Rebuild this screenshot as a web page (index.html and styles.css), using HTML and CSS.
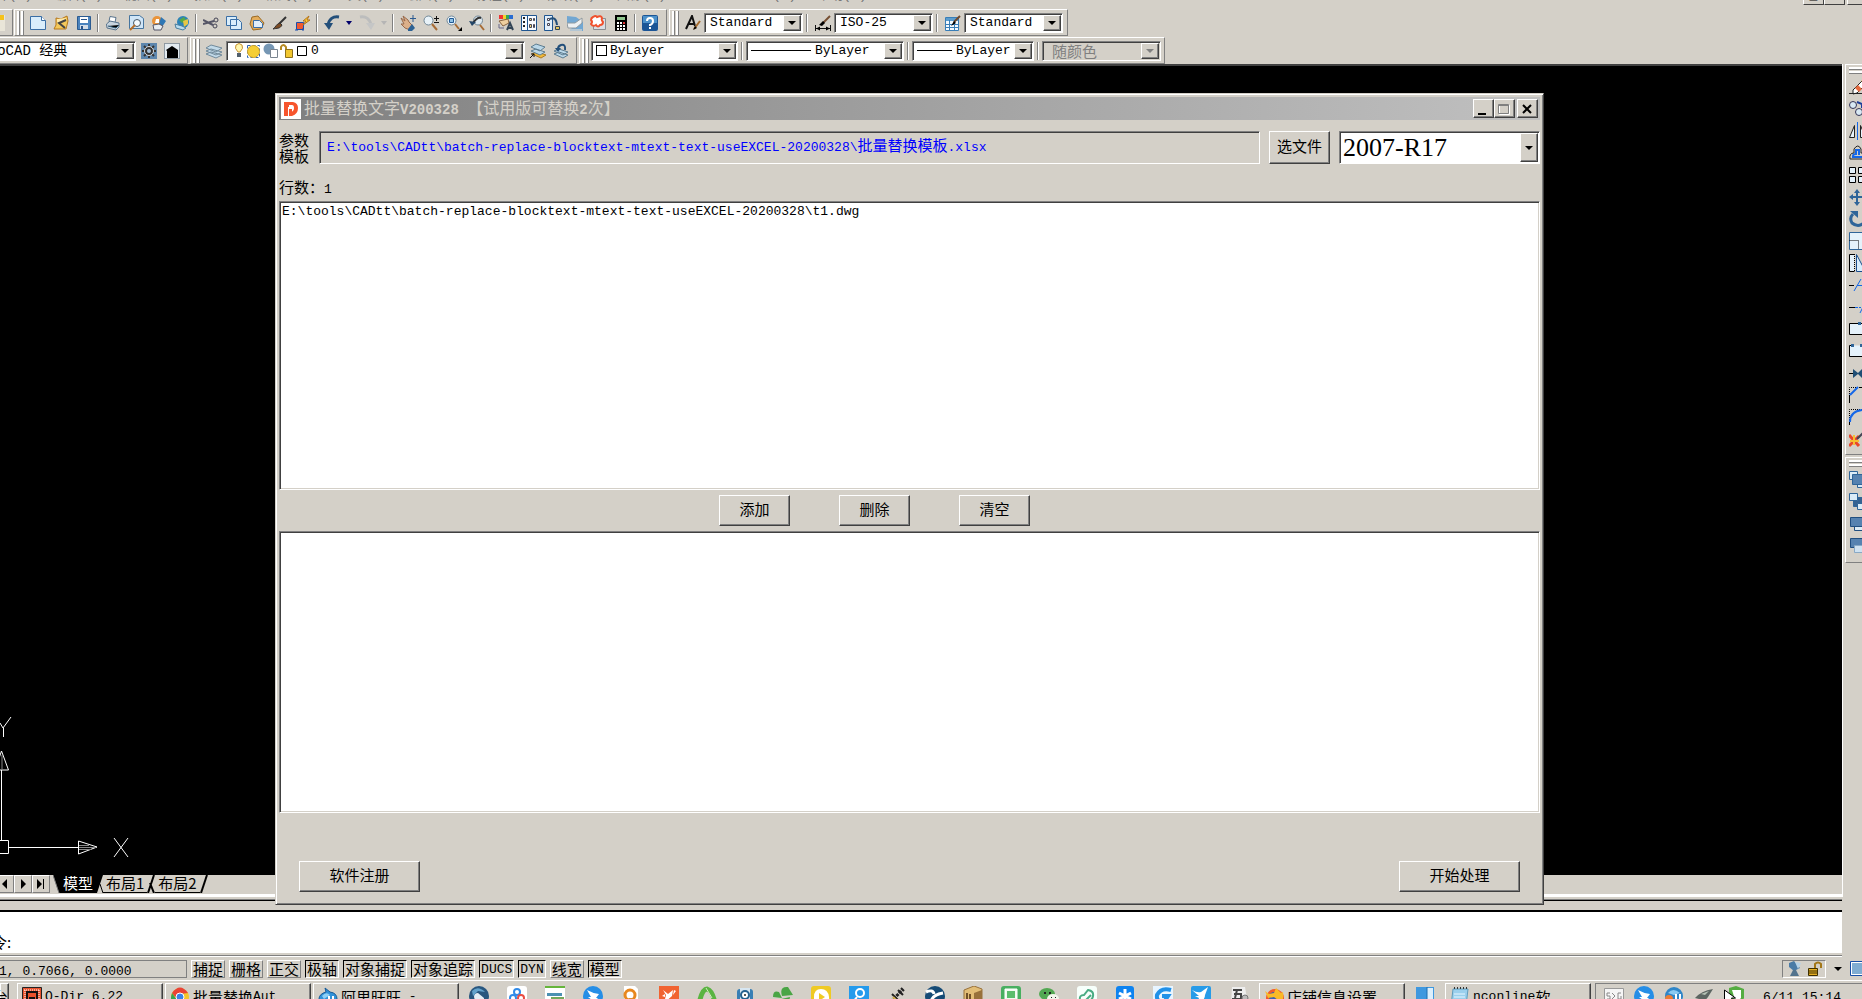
FILE: index.html
```html
<!DOCTYPE html>
<html lang="zh-CN">
<head>
  <meta charset="UTF-8">
  <meta name="viewport" content="width=device-width, initial-scale=1.0">
  <title>批量替换文字V200328</title>
  <link rel="stylesheet" href="styles.css">
</head>
<body>
  <nav class="menubar">
    <span class="first">文件(F)</span><span>编辑(E)</span><span>视图(V)</span><span>插入(I)</span><span>格式(O)</span><span>工具(T)</span><span>绘图(D)</span><span>标注(N)</span><span>修改(M)</span><span>图像(W)</span><span>Batch Plot (E)</span><span>帮助(H)</span>
    <div class="app-controls"><button aria-label="最小化">_</button><button aria-label="还原">▬</button><button aria-label="关闭"></button></div>
  </nav>

  <div class="dock">
    <div class="dock-row">
      <div class="bar bar-cut">
        <svg width="5" height="16" viewBox="0 0 5 16"><path fill="#e9e5d8" d="M0 0h5v16H0z"/><path fill="#f5c21b" d="M0 0h4v5H0z"/></svg>
      </div>
      <div class="bar bar-standard">
        <i class="grip"></i>
        <button class="tool" aria-label="新建"><svg viewBox="0 0 16 16"><path fill="#d9edfb" stroke="#3a6ea5" d="M.5 1.500h11l4 4v9H.5z"/><path fill="#fff" stroke="#3a6ea5" d="M11.500 1.500v4h4"/></svg></button>
        <button class="tool" aria-label="打开"><svg viewBox="0 0 16 16"><path fill="#f4c95b" stroke="#b5771d" d="M3 3l5 1 6-3 1 5-2 8H1l2-4z"/><path fill="#ffe9a8" d="M4 4l9-1-1 2-8 3z"/><path fill="none" stroke="#444" stroke-width="2" d="M13 5L6 8l6 5"/></svg></button>
        <button class="tool" aria-label="保存"><svg viewBox="0 0 16 16"><path fill="#4b83bd" stroke="#2b5b91" d="M1.500 1.500h13v13h-13z"/><path fill="#fff" d="M4 2h8v6H4z"/><path fill="#d4dce6" d="M4 10h8v4H4z"/><path fill="#29548a" d="M5 4h6v1H5zM5 11h2v3H5z"/></svg></button>
        <i class="sep"></i>
        <button class="tool" aria-label="打印"><svg viewBox="0 0 16 16"><path fill="#fff" stroke="#58738c" d="M5 1.500l6 1-1 5-6-1z"/><path fill="#c8d5df" stroke="#58738c" d="M1.500 9L5 6l9 2v4l-3 3-9-2z"/><path stroke="#2e5b78" d="M3 11l8 2 3-3"/></svg></button>
        <button class="tool" aria-label="打印预览"><svg viewBox="0 0 16 16"><path fill="#cfe5f7" stroke="#46759f" d="M1.500.5h10l4 3v10h-14z"/><circle cx="9" cy="8" r="3.500" fill="#f4faff" stroke="#456"/><path stroke="#b56d29" stroke-width="2" d="M7 10l-5 5"/></svg></button>
        <button class="tool" aria-label="发布"><svg viewBox="0 0 16 16"><circle cx="6" cy="6" r="5" fill="#e9943a"/><path fill="#2e77b5" d="M10 2l5 4-4 6-3-3z"/><path fill="#e8edf1" stroke="#556" d="M2 10l6-1 4 2-2 4H3z"/><path fill="#fff" d="M5 4h3v4H4z"/></svg></button>
        <button class="tool" aria-label="三维 DWF"><svg viewBox="0 0 16 16"><circle cx="9" cy="7" r="6" fill="#2c83b8"/><path fill="#57a746" d="M5 5l5-3 2 3-4 3z"/><path fill="#e7c745" d="M9 6l5-2v5l-4 3z"/><path fill="#b9dcef" stroke="#4a7d9d" d="M1 9l7 2 4 2-3 2-7-2z"/></svg></button>
        <i class="sep"></i>
        <button class="tool" aria-label="剪切"><svg viewBox="0 0 16 16"><path stroke="#556" stroke-width="2" d="M0 5l10 5M0 9l11-3"/><circle cx="13" cy="5" r="2" fill="none" stroke="#445"/><circle cx="12" cy="11" r="2" fill="none" stroke="#445"/></svg></button>
        <button class="tool" aria-label="复制"><svg viewBox="0 0 16 16"><path fill="#d9edfb" stroke="#3a6ea5" d="M.5 1.500h10v9H.5zM4.500 4.500h8l3 3v7h-11z"/></svg></button>
        <button class="tool" aria-label="粘贴"><svg viewBox="0 0 16 16"><path fill="#e4ad5c" stroke="#9a6a24" d="M3 2l6-1 6 7-3 6-8 1-3-6z"/><path fill="#e2effa" stroke="#3a6ea5" d="M4.500 5.500h6l3 3v4h-9z"/></svg></button>
        <button class="tool" aria-label="特性匹配"><svg viewBox="0 0 16 16"><path stroke="#333" stroke-width="2" d="M14 2L7 9"/><path fill="#7d4c24" stroke="#333" d="M8 8l2 2c-2 4-5 3-9 4 3-2 3-5 7-6z"/></svg></button>
        <button class="tool" aria-label="块编辑器"><svg viewBox="0 0 16 16"><path fill="#f05a30" stroke="#1b4dac" d="M1.500 7.500h7v7h-7z"/><path fill="#fcd135" stroke="#b5731b" d="M14 1L8 6h3l-3 4 7-5h-3z"/><path stroke="#1b4dac" d="M0 15h3M8 13v3"/></svg></button>
        <i class="sep"></i>
        <button class="tool" aria-label="放弃"><svg viewBox="0 0 16 16"><path fill="none" stroke="#234f7a" stroke-width="3" d="M15 2C9 1 5 4 4 10"/><path fill="#234f7a" d="M0 8h9l-4 7z"/></svg></button>
        <button class="drop" aria-label="放弃列表"></button>
        <button class="tool" aria-label="重做"><svg viewBox="0 0 16 16"><path fill="none" stroke="#bcbdbd" stroke-width="3" d="M1 2c6-1 10 2 11 8"/><path fill="#c5c6c6" d="M7 8h9l-4 7z"/></svg></button>
        <button class="drop off" aria-label="重做列表"></button>
        <i class="sep"></i>
        <button class="tool" aria-label="平移"><svg viewBox="0 0 16 16"><path fill="#dcb08a" stroke="#98694b" d="M1 3l4 3-2-5 5 4 1 2 4 4-3 4-5-2-4-4 3 0z"/><path fill="#2d6294" d="M8 14l4-5 3 4-3 3H8z"/><path stroke="#2b5a91" d="M13 0v7M10 3.500h6"/></svg></button>
        <button class="tool" aria-label="实时缩放"><svg viewBox="0 0 16 16"><circle cx="5.500" cy="5.500" r="4.500" fill="#e8f2f8" stroke="#718797"/><path stroke="#a76c36" stroke-width="2" d="M9 9l5 6"/><path stroke="#111" d="M13.500 1v5M11 3.500h5M11 7.500h5"/></svg></button>
        <button class="tool" aria-label="窗口缩放"><svg viewBox="0 0 16 16"><circle cx="5.500" cy="5.500" r="4.500" fill="#e8f2f8" stroke="#718797"/><path fill="#8dc0e5" stroke="#205894" d="M3.500 3.500h4v4h-4z"/><path stroke="#a76c36" stroke-width="2" d="M9 9l4 5"/><path d="M16 12v4h-4z"/></svg></button>
        <button class="tool" aria-label="缩放上一个"><svg viewBox="0 0 16 16"><circle cx="9" cy="5.500" r="4.500" fill="#dfe9ef" stroke="#718797"/><path fill="none" stroke="#333" stroke-width="2" d="M12 3Q8 2 4 8"/><path fill="#234567" d="M0 6l7 1-4 4z"/><path stroke="#a76c36" stroke-width="2" d="M11 10l4 5"/></svg></button>
        <i class="sep"></i>
        <button class="tool" aria-label="特性"><svg viewBox="0 0 16 16"><path fill="#e33" d="M1 0h4v4H1z"/><path fill="#f3d12c" d="M5 0h3v4H5z"/><path fill="#33a853" d="M8 0h3v4H8z"/><path fill="#286cd2" d="M11 0h4v4h-4z"/><path fill="#efcf9f" stroke="#886340" d="M1 6l9-2 1 4-6 3z"/><path fill="none" stroke="#345" stroke-width="2" d="M9 15l3-7 3 7M10 13h4"/><path fill="none" stroke="#668" d="M1 9v4h5"/></svg></button>
        <button class="tool" aria-label="设计中心"><svg viewBox="0 0 16 16"><path fill="#f8fbff" stroke="#1f5590" d="M.5.5h15v15H.5z"/><path stroke="#1f5590" d="M6.500 0v16"/><path stroke="#222" stroke-width="2" stroke-dasharray="2 2" d="M3 2v12"/><path fill="#f2dc77" stroke="#445" d="M8.500 3.500h2v2h-2zM12.500 3.500h1v2h-1zM8.500 9.500h2v3h-2zM12.500 9.500h1v3h-1z"/></svg></button>
        <button class="tool" aria-label="工具选项板"><svg viewBox="0 0 16 16"><path fill="#e1eefa" stroke="#1f5590" d="M.5.5h8v15h-8z"/><path fill="#fff" stroke="#445" d="M3.500 3.500h2v2h-2zM3.500 8.500h2v2h-2z"/><path fill="none" stroke="#234f7a" stroke-width="2" d="M6 4q6-3 7 6"/><path fill="#e3c55b" stroke="#345" d="M11.500 11.500h4v3h-4z"/></svg></button>
        <button class="tool" aria-label="图纸集"><svg viewBox="0 0 16 16"><path fill="#72a7d2" d="M0 1l9 1 7 5v9H9L0 11z"/><path fill="#edf0f2" stroke="#919a9f" d="M0 8h8l7-5v5l-6 5H1z"/><path fill="#b4c6d3" d="M3 14h12v2H3z"/></svg></button>
        <button class="tool" aria-label="标记集"><svg viewBox="0 0 16 16"><path fill="#d9dee4" stroke="#8a8d91" d="M3.500 3.500h12v11h-12z"/><path fill="#fff" stroke="#f0512d" stroke-width="2" d="M3 2q3-2 4 0 4-2 5 1-1 2 1 4 0 3-3 3-2 3-4 0-3 2-5-1 2-2 0-4 0-2 2-3z"/></svg></button>
        <button class="tool" aria-label="计算器"><svg viewBox="0 0 16 16"><path d="M2 0h12v16H2z"/><path fill="#8fc68e" d="M4 2h8v3H4z"/><path stroke="#fff" stroke-width="2" stroke-dasharray="2 1" d="M4 8h8M4 11h8M4 14h8"/><path fill="#d33" d="M10 7h2v2h-2z"/></svg></button>
        <i class="sep"></i>
        <button class="tool" aria-label="帮助"><svg viewBox="0 0 16 16"><rect width="16" height="16" rx="2" fill="#1b5596"/><path fill="#4c91ca" d="M1 1h14v7H1z"/><path fill="none" stroke="#fff" stroke-width="2" d="M5 6q0-3 3-3t3 3-3 4v1M8 12v2"/></svg></button>
      </div>
      <div class="bar">
        <i class="grip"></i>
        <button class="tool" aria-label="文字样式"><svg viewBox="0 0 16 16"><path fill="none" stroke="#111" stroke-width="2" d="M1 14L7 1l3 10M3 9h6"/><path stroke="#a56b2d" stroke-width="2" d="M15 6l-6 8"/><path d="M10 11l2 2-4 2z"/></svg></button>
        <span class="combo combo-style"><select aria-label="文字样式"><option>Standard</option></select><i></i></span>
        <i class="sep thick"></i>
        <button class="tool" aria-label="标注样式"><svg viewBox="0 0 16 16"><path stroke="#111" d="M.5 10v6M15.500 10v6M0 13.500h16"/><path d="M1 13.500l4-2v4zM15 13.500l-4-2v4z"/><path stroke="#765033" stroke-width="2" d="M15 1L8 8"/><path d="M4 10l4-4 2 2-3 3z"/></svg></button>
        <span class="combo combo-style"><select aria-label="标注样式"><option>ISO-25</option></select><i></i></span>
        <i class="sep thick"></i>
        <button class="tool" aria-label="表格样式"><svg viewBox="0 0 16 16"><path fill="#f4faff" stroke="#397eb7" d="M.5 2.500h13v13H.5z"/><path fill="#5b9dce" d="M1 3h12v3H1z"/><path stroke="#397eb7" d="M0 9.500h14M0 12.500h14M4.500 5v10M9.500 5v10"/><path stroke="#704a2d" stroke-width="2" d="M15 1L9 7"/><path d="M9 6l2 2-5 3z"/></svg></button>
        <span class="combo combo-style"><select aria-label="表格样式"><option>Standard</option></select><i></i></span>
      </div>
    </div>

    <div class="dock-row">
      <div class="bar bar-workspace">
        <span class="combo combo-workspace"><select aria-label="工作空间"><option>AutoCAD 经典</option></select><i></i></span>
        <button class="tool" aria-label="工作空间设置"><svg viewBox="0 0 16 16"><path fill="#5d86ad" d="M0 0h16v16H0z"/><path stroke="#333" stroke-width="2" d="M8 1v14M1 8h14M3 3l10 10M13 3L3 13"/><circle cx="8" cy="8" r="4.500" fill="#333" stroke="#ddd"/><circle cx="8" cy="8" r="2" fill="#a9c2da"/></svg></button>
        <button class="tool" aria-label="我的工作空间"><svg viewBox="0 0 16 16"><path fill="#e3ebf1" stroke="#42566b" stroke-dasharray="1 1" d="M.5.5h15v15H.5z"/><path d="M2 7l6-4 6 4v8H3V8z"/></svg></button>
      </div>
      <div class="bar">
        <i class="grip"></i>
        <button class="tool" aria-label="图层特性"><svg viewBox="0 0 16 16"><g fill="#c1d9e8" stroke="#70899a"><path d="M0 11l5-2 11 3-6 3zM0 8l5-2 11 3-6 3zM0 5l5-3 11 3-6 4z"/></g></svg></button>
        <span class="combo combo-layer">
          <svg class="layer-state" width="75" height="16" viewBox="0 0 75 16"><path fill="#fff6ad" stroke="#c69233" d="M6 9Q2 5 4 2q3-3 6 0 2 3-2 7z"/><path fill="#52606d" d="M5 10h4v4H5z"/><path fill="none" stroke="#2d64b3" stroke-dasharray="3 2" d="M15.500 2.500h12v12h-12z"/><circle cx="21.500" cy="8.500" r="6" fill="#f5ce36" stroke="#cfa32a"/><circle cx="37" cy="6" r="5.500" fill="#7697b4"/><path fill="#fff" stroke="#7a8590" d="M38.500 6.500h7v8h-7z"/><path fill="none" stroke="#b68a23" stroke-width="2" d="M49 7V4q2-4 5 0v3"/><path fill="#f2c72f" stroke="#8e701d" d="M53.500 6.500h7v8h-7z"/><path fill="#fff" stroke="#000" d="M65.500 3.500h9v9h-9z"/></svg>
          <select aria-label="图层"><option>0</option></select><i></i></span>
        <button class="tool" aria-label="置为当前图层"><svg viewBox="0 0 16 16"><path fill="#efb93c" stroke="#ad7c22" d="M2 11l5-2 9 3-5 3z"/><g fill="#bad7e8" stroke="#5e7d90"><path d="M1 8l5-2 9 3-5 3zM1 4l5-3 9 3-5 4z"/></g><path fill="none" stroke="#111" d="M0 15l4-4M1 11h3v3"/></svg></button>
        <button class="tool" aria-label="上一个图层"><svg viewBox="0 0 16 16"><g fill="#bad7e8" stroke="#5e7d90"><path d="M1 11l5-2 9 3-5 3zM1 8l5-2 9 3-5 3z"/></g><path fill="none" stroke="#234f7a" stroke-width="2" d="M12 7q1-6-4-5-3 1-3 4"/><path fill="#234f7a" d="M2 5h6l-3 4z"/></svg></button>
      </div>
      <div class="bar bar-props">
        <i class="grip"></i>
        <span class="combo combo-color"><b class="swatch"></b><select aria-label="颜色"><option>ByLayer</option></select><i></i></span>
        <i class="sep thick"></i>
        <span class="combo combo-line"><b class="line line-long"></b><select aria-label="线型"><option>ByLayer</option></select><i></i></span>
        <i class="sep thick"></i>
        <span class="combo combo-weight"><b class="line"></b><select aria-label="线宽"><option>ByLayer</option></select><i></i></span>
        <i class="sep thick"></i>
        <span class="combo combo-plot off"><select aria-label="打印样式" disabled><option>随颜色</option></select><i></i></span>
      </div>
    </div>
  </div>

  <div class="workspace">
    <div class="drawing">
      <div class="canvas">
        <svg width="135" height="160" viewBox="0 0 135 160" fill="none" stroke="#fff"><path d="M0 8l3 5 8-11M3.500 13v9M1.500 55v70M-5 125.500H8.500v13H-5M9 132.500h69M1.500 36l7 19H-5zM78.500 126v13L97 132zM114 123l14 19M128 123l-14 19"/><path stroke="#888" d="M2 40v14M79 130.500h10M79 134.500h12M79 132.500h17"/></svg>
      </div>
      <div class="tabs">
        <button class="tab-nav" aria-label="上一个"><svg width="8" height="10" viewBox="0 0 8 10"><path d="M6 0v10L1 5z"/></svg></button>
        <button class="tab-nav" aria-label="下一个"><svg width="8" height="10" viewBox="0 0 8 10"><path d="M2 0v10l5-5z"/></svg></button>
        <button class="tab-nav" aria-label="最后"><svg width="8" height="10" viewBox="0 0 8 10"><path d="M0 0v10l5-5zM6 0h1v10H6z"/></svg></button>
        <svg class="edge edge-first" viewBox="0 0 8 18"><path d="M0 0h8v18H6z"/><path stroke="#777" d="M0 0l6 18"/></svg>
        <button class="tab active">模型</button>
        <svg class="edge" viewBox="0 0 8 18"><path d="M0 0h8L2 18H0z"/><path stroke="#000" fill="none" d="M5 9l3 9"/></svg>
        <button class="tab">布局1</button>
        <svg class="edge" viewBox="0 0 8 18"><path stroke="#000" stroke-width="2" fill="none" d="M7 0L1 18M3 8l4 10"/></svg>
        <button class="tab">布局2</button>
        <svg class="edge" viewBox="0 0 8 18"><path stroke="#000" stroke-width="2" d="M7 0L1 18"/></svg>
      </div>
    </div>

    <aside class="modify">
      <div class="vbar">
        <i class="vgrip"></i>
        <svg viewBox="0 0 18 18"><path fill="#fff" stroke="#222" d="M4 12l9-9 4 3-9 9-4 1z"/><path fill="#e56a3f" d="M6 10l3-3 4 4-3 3z"/><path fill="#f7b52d" d="M12 3l5-3v6z"/><path stroke="#222" d="M0 15.500h16"/></svg>
        <svg viewBox="0 0 18 18" fill="#d8e9f4" stroke="#335"><circle cx="4" cy="5" r="3.500"/><circle cx="10" cy="12" r="3.500"/><path fill="none" stroke="#1c3d9a" stroke-width="2" d="M8 2l5 2v4"/></svg>
        <svg viewBox="0 0 18 18"><path fill="#e8f4fd" stroke="#222" d="M.5 15.500l5-12v12zM16.500 15.500l-5-12v12z"/><path stroke="#1467e8" d="M8.500 0v18"/></svg>
        <svg viewBox="0 0 18 18" fill="none"><path stroke="#222" d="M1 15h15V9h-4V5q-3-6-7 0v4Q0 9 1 15z"/><path stroke="#1467e8" stroke-width="2" d="M3 13h11M4 12q0-2 3-2V6h3v5"/></svg>
        <svg viewBox="0 0 18 18" fill="#e5f2fb" stroke="#000"><path d="M.5 1.500h6v6h-6zM9.500 1.500h6v6h-6zM.5 10.500h6v6h-6zM9.500 10.500h6v6h-6z"/></svg>
        <svg viewBox="0 0 18 18" fill="#2f6599"><path d="M8 1l3 4H9v3h4V6l4 3-4 3v-2H9v4h2l-3 4-3-4h2v-4H4v2L0 9l4-3v2h3V5H5z"/></svg>
        <svg viewBox="0 0 18 18"><path fill="none" stroke="#2f6599" stroke-width="3" d="M4 4q-4 4-1 9 6 5 12 0"/><path fill="#2f6599" d="M1 1h8v7z"/></svg>
        <svg viewBox="0 0 18 18"><path fill="#e5f2fb" stroke="#2f6599" d="M.5.5h17v17H.5z"/><path fill="none" stroke="#000" stroke-dasharray="1 1" d="M.5 8.500h9v9"/></svg>
        <svg viewBox="0 0 18 18"><path fill="#e5f2fb" stroke="#000" d="M5.500.5h-5v17h5"/><path stroke="#000" stroke-dasharray="1 1" d="M5.500 0v18"/><path fill="#d9edfb" stroke="#1b4e8d" d="M7.500.5v17h9z"/></svg>
        <svg viewBox="0 0 18 18"><path stroke="#000" d="M0 9.500h5M13 9.500h5"/><path stroke="#1467e8" d="M5 15l7-12M8 9.500h5"/></svg>
        <svg viewBox="0 0 18 18"><path stroke="#000" d="M0 9.500h6"/><path stroke="#1467e8" stroke-dasharray="3 1" d="M6 9.500h6"/><path stroke="#1467e8" d="M11 15l6-12"/></svg>
        <svg viewBox="0 0 18 18"><path fill="#e5f2fb" stroke="#000" d="M.5 3.500h17v11H.5z"/><path fill="#2f6599" d="M9 2h3v3H9z"/></svg>
        <svg viewBox="0 0 18 18"><path fill="#e5f2fb" stroke="#000" d="M3 3.500H.5v11h17v-11H13"/><path fill="#2f6599" d="M2 2h3v3H2zM11 2h3v3h-3z"/></svg>
        <svg viewBox="0 0 18 18"><path stroke="#000" d="M0 9.500h18"/><path fill="#1f4e75" d="M4 5l5 4 4-4v9L9 10l-5 4z"/></svg>
        <svg viewBox="0 0 18 18"><path fill="none" stroke="#000" stroke-dasharray="1 1" d="M.5 8V1.500h9"/><path stroke="#000" d="M.5 9v8M10 1.500h7"/><path stroke="#1467e8" stroke-width="2" d="M1 9l8-8"/></svg>
        <svg viewBox="0 0 18 18"><path fill="none" stroke="#000" stroke-dasharray="1 1" d="M.5 12V1.500h14"/><path stroke="#000" d="M.5 12v5"/><path fill="none" stroke="#1467e8" stroke-width="2" d="M1 14Q1 3 14 2"/></svg>
        <svg viewBox="0 0 18 18"><path stroke="#e9472a" stroke-width="3" d="M0 5l10 11M10 6L0 16"/><path stroke="#f6bf31" stroke-width="2" d="M5 5v10M1 11h9"/><path stroke="#445" stroke-width="2" d="M8 9l9-9"/></svg>
      </div>
      <div class="vbar order">
        <i class="vgrip"></i>
        <svg viewBox="0 0 18 18" stroke="#2f6599"><path fill="#dcecf7" d="M.5.5h8v8h-8zM8.500 9.500h8v7h-8z"/><path fill="#5682b0" d="M3.500 3.500h11v10h-11z"/></svg>
        <svg viewBox="0 0 18 18" stroke="#2f6599"><path fill="#356291" d="M4.500 4.500h10v9h-10z"/><path fill="#dcecf7" d="M.5.500h8v7h-8zM8.500 10.500h8v6h-8z"/></svg>
        <svg viewBox="0 0 18 18" stroke="#214f80"><path fill="#dcecf7" d="M5.500 8.500h12v7h-12z"/><path fill="#5682b0" d="M1.500 2.500h14v9h-14z"/></svg>
        <svg viewBox="0 0 18 18" stroke="#214f80"><path fill="#5682b0" d="M1.500 1.500h14v9h-14z"/><path fill="#cfe2f1" stroke="#89a9c5" d="M5.500 8.500h12v7h-12z"/></svg>
      </div>
    </aside>
  </div>

  <div class="command"><label for="cmd">命令:</label><input id="cmd" type="text"></div>

  <div class="status">
    <div class="coords">1, 0.7066, 0.0000</div>
    <button>捕捉</button><button>栅格</button><button>正交</button><button class="on">极轴</button><button class="on">对象捕捉</button><button class="on">对象追踪</button><button class="on latin">DUCS</button><button class="on latin">DYN</button><button>线宽</button><button class="on">模型</button>
    <div class="status-tray">
      <svg width="16" height="16" viewBox="0 0 16 16"><path fill="#4a7ba6" d="M2 2l5-2 6 7-6 3-5-4z"/><path fill="#b7d2e6" d="M8 1l6 1-3 6z"/><path fill="#54748d" d="M6 9h3l3 6H3z"/></svg>
      <svg width="16" height="16" viewBox="0 0 16 16"><path fill="none" stroke="#a37717" stroke-width="2" d="M8 7V3q3-3 6 0v4"/><path fill="#e7af22" stroke="#403000" d="M1.500 7.500h9v7h-9z"/><path stroke="#403000" d="M2 10h8M2 12h8"/></svg>
    </div>
    <button class="drop black" aria-label="状态栏菜单"></button>
    <svg class="clean" width="12" height="16" viewBox="0 0 12 16"><path fill="#fff" stroke="#174ea6" d="M.5.500h15v14H.5z"/><path fill="#80add2" d="M2 2h10v11H2z"/></svg>
  </div>

  <footer class="taskbar">
    <button class="task task-cut">台</button>
    <button class="task"><svg viewBox="0 0 20 20"><path fill="#e7522d" stroke="#222" d="M.5.500h19v19H.5z"/><path fill="none" stroke="#fff" stroke-dasharray="1 1" d="M2 3h16M2 17h16M3 3v14M17 3v14"/><path fill="#e7522d" stroke="#111" stroke-width="2" d="M5 5h10v10h-3v-4H8v4H5z"/></svg>Q-Dir 6.22</button>
    <button class="task"><svg viewBox="0 0 20 20"><circle cx="10" cy="10" r="9" fill="#f5c52c"/><path fill="#e94335" d="M2 6q8-11 16 0l-8 1-3 5z"/><path fill="#34a553" d="M2 6l5 7 3 6Q-2 18 2 6z"/><circle cx="10" cy="10" r="4" fill="#3c82e8" stroke="#fff"/></svg><span class="zh">批量替换</span>Aut</button>
    <button class="task"><svg viewBox="0 0 20 20"><path fill="#3191d8" stroke="#165a97" d="M7 1l5 4q7 1 7 7-1 7-9 7-9 0-9-7 0-5 7-7z"/><path fill="#8ed0f6" d="M4 9q4-5 8-1l-6 4z"/><path stroke="#fff" stroke-width="2" d="M11 9v4M15 9v4"/></svg><span class="zh">阿里旺旺</span> -</button>
    <div class="quick">
      <svg viewBox="0 0 20 20"><circle cx="10" cy="10" r="10" fill="#29577f"/><path fill="#e4eef5" d="M5 11q0-4 4-4l6 5v6H7z"/><path fill="#64a3cc" d="M3 5q6-6 13 1l-7-1-5 5z"/></svg>
      <svg viewBox="0 0 20 20"><rect width="20" height="20" rx="3" fill="#fff"/><g fill="none" stroke-width="2"><circle cx="10" cy="6" r="3" stroke="#318be8"/><circle cx="6" cy="12" r="3" stroke="#318be8"/><circle cx="14" cy="12" r="3" stroke="#e94c42"/></g></svg>
      <svg viewBox="0 0 20 20"><path fill="#fff" d="M0 0h20v20H0z"/><path fill="#65b53b" d="M0 0h20v2H0z"/><path fill="#4b91b2" d="M2 7h15v3H2z"/><path fill="#75a95a" d="M6 11h13v3H6z"/></svg>
      <svg viewBox="0 0 20 20"><circle cx="10" cy="10" r="10" fill="#268ee6"/><path fill="#fff" d="M4 4q5 3 12 4l-3 4h2l-7 7 1-5-4-3h3z"/></svg>
      <svg viewBox="0 0 20 20"><path fill="#fff" d="M3 0h11l3 3v17H3z"/><circle cx="9" cy="9" r="5" fill="none" stroke="#e8881e" stroke-width="3"/><path fill="#dc8b31" d="M8 12h4v4H8z"/></svg>
      <svg viewBox="0 0 20 20"><path fill="#f16331" d="M0 0h20v20H0z"/><path fill="#fff" d="M4 4l5 4 5-4-1 6-8 7 2-8zM3 10l3-2v3zM15 4l2 1-3 4z"/></svg>
      <svg viewBox="0 0 20 20"><path fill="none" stroke="#5ab442" stroke-width="5" d="M2 18Q5 3 10 3q6 2 8 15"/><path stroke="#d3ebbf" d="M9 2l6 10"/></svg>
      <svg viewBox="0 0 20 20"><rect x="2" y="3" width="16" height="15" rx="3" fill="#387fb5"/><path fill="#d7e6f1" d="M5 2h10v13H5z"/><circle cx="10" cy="9" r="4" fill="#fff" stroke="#26618f" stroke-width="2"/><circle cx="10" cy="9" r="1" fill="#222"/></svg>
      <svg viewBox="0 0 20 20"><g fill="#4aa545"><path d="M9 10Q6 0 15 1l5 8zM0 11Q0 4 6 6l3 6zM4 14l13-3q-1 8-8 7z"/></g></svg>
      <svg viewBox="0 0 20 20"><rect width="20" height="20" rx="3" fill="#efca24"/><path fill="#fff" d="M3 11q0-8 7-8t8 8-8 7H3z"/><path fill="#efca24" d="M8 7l6 4-6 4z"/></svg>
      <svg viewBox="0 0 20 20"><path fill="#249aec" d="M0 0h20v20H0z"/><path fill="#f9d84a" d="M0 15h20v5H0z"/><circle cx="11" cy="7" r="4" fill="none" stroke="#fff" stroke-width="2"/><path stroke="#fff" stroke-width="2" d="M8 11l-4 5"/></svg>
      <svg viewBox="0 0 20 20"><path stroke="#222" stroke-width="3" stroke-dasharray="3 1" d="M4 16L15 4"/><path stroke="#222" stroke-width="2" d="M5 8l6 6M11 4l5 5M14 2l3 3"/><path stroke="#d8b34c" stroke-width="2" d="M6 11l3 3"/></svg>
      <svg viewBox="0 0 20 20"><circle cx="10" cy="10" r="10" fill="#154a75"/><path fill="none" stroke="#fff" stroke-width="3" d="M1 6q7-3 8 2M6 19q-1-10 12-12"/></svg>
      <svg viewBox="0 0 20 20"><path fill="#e2bd76" stroke="#98713b" d="M1 4l10-4 8 3v14l-8 3-10-4z"/><path fill="#98713b" d="M11 7l8-3v13l-8 3z"/><path stroke="#705028" stroke-width="2" d="M4 7v9M7 8v6"/></svg>
      <svg viewBox="0 0 20 20"><rect width="20" height="20" rx="3" fill="#48af60"/><path fill="#f1faf0" stroke="#fff" d="M4 3h12v14H4z"/><path fill="#5bbd6c" d="M6 5h8v7H6z"/></svg>
      <svg viewBox="0 0 20 20"><ellipse cx="8" cy="8" rx="8" ry="6" fill="#52a852"/><ellipse cx="14" cy="13" rx="6" ry="5" fill="#f3f7ed"/><path fill="#222" d="M5 6h2v2H5zM10 6h2v2h-2zM12 11h1v1h-1zM16 11h1v1h-1z"/></svg>
      <svg viewBox="0 0 20 20"><rect width="20" height="20" rx="3" fill="#f7fffb"/><path fill="none" stroke="#49ab83" stroke-width="2" d="M3 14q-1-5 4-5l4-5q6 1 5 6-1 6-7 4l5-5"/></svg>
      <svg viewBox="0 0 20 20"><rect x="1" width="18" height="20" rx="3" fill="#0d83f0"/><path stroke="#fff" stroke-width="3" d="M10 3v14M4 7l12 6M16 7L4 13"/></svg>
      <svg viewBox="0 0 20 20"><path fill="#e8f5ff" d="M0 0h20v20H0z"/><path fill="none" stroke="#2191e8" stroke-width="4" d="M18 4Q8 1 4 9q-1 7 7 7l4-6H9"/></svg>
      <svg viewBox="0 0 20 20"><rect width="20" height="20" rx="2" fill="#279be8"/><path fill="#fff" d="M1 4q5 3 9 2l7-5-3 8q0 6-8 8l2-5-4-2h4z"/></svg>
      <svg viewBox="0 0 20 20"><path fill="#eee" d="M3 1h13l3 18H2z"/><path fill="none" stroke="#444" stroke-width="2" d="M4 4h9M8 4L6 12M5 8h7v5M3 13h12"/><circle cx="16" cy="12" r="3" fill="#bbb" stroke="#777"/></svg>
    </div>
    <button class="task"><svg viewBox="0 0 20 20"><circle cx="11" cy="11" r="9" fill="#f15a2b"/><circle cx="10" cy="10" r="5" fill="#3d61b1"/><path fill="#f9ba27" d="M1 4l4 3 5-1 2-5 5 5 2-1q2 14-10 13l5-5-4-3-6 1z"/></svg><span class="zh">店铺信息设置</span></button>
    <div class="quick single"><svg viewBox="0 0 20 20"><path fill="#3f98df" d="M1 1h18v18H1z"/><path fill="#dceffc" d="M12 2h6v11l-6 3z"/><path stroke="#1d6cac" d="M12 1v18"/></svg></div>
    <button class="task"><svg viewBox="0 0 20 20"><path fill="#9bd0ed" stroke="#5f9cbd" d="M3 2h15l-2 17H1z"/><path stroke="#e8f7ff" d="M4 7h11M4 10h11M4 13h11"/><path stroke="#333" stroke-width="2" stroke-dasharray="1 2" d="M4 1h14"/></svg>nconline<span class="zh">软</span></button>
    <div class="tray">
      <svg viewBox="0 0 20 20"><path fill="#f5f5f5" stroke="#999" d="M.5 2.500h19v16H.5z"/><path fill="none" stroke="#888" d="M6 7H3v3h3v3H3M8 7l3 3-3 3M17 7h-3v6h3v-3"/></svg>
      <svg viewBox="0 0 20 20"><circle cx="10" cy="10" r="10" fill="#268ee6"/><path fill="#fff" d="M4 4q5 3 12 4l-3 4h2l-7 7 1-5-4-3h3z"/></svg>
      <svg viewBox="0 0 20 20"><circle cx="10" cy="10" r="9" fill="#2f86c8"/><path fill="#8acaf1" d="M4 7q5-6 12 0l-6 2z"/><path stroke="#fff" stroke-width="2" d="M12 8v5M16 8v5"/><circle cx="5" cy="13" r="4" fill="#ee7d35"/></svg>
      <svg viewBox="0 0 20 20"><path fill="#5c6662" d="M1 12Q7 5 19 3l-5 8q-5 7-14 7l5-5z"/><path fill="#b5c2b5" d="M7 8l8-3-4 4z"/></svg>
      <svg viewBox="0 0 20 20"><path fill="#55ad42" d="M5 2l7-2 8 3v9q-3 7-8 8-6-2-7-8z"/><path fill="#fff" d="M8 4h9v8l-5 5z"/><path fill="#fff" stroke="#000" d="M.5 4v14l4-4 3 5 3-2-3-5h4z"/></svg>
      <time>6/11 15:14</time>
    </div>
  </footer>

  <section class="dialog" role="dialog" aria-labelledby="dialogTitle">
    <header class="titlebar">
      <svg width="20" height="20" viewBox="0 0 20 20"><path fill="#fff" d="M0 0h20v20H0z"/><path fill="#f7552d" d="M3 3h9q5 1 5 6 0 6-6 8H8v-4h2q3-1 3-4t-2-3H8v2H7v9H3z"/><path fill="#f7552d" d="M8 10h3v3H8z"/></svg>
      <h1 id="dialogTitle"><span class="zh">批量替换文字</span>V200328 <span class="zh">【试用版可替换</span>2<span class="zh">次】</span></h1>
      <div class="controls">
        <button aria-label="最小化"><svg viewBox="0 0 18 16"><path d="M4 12h8v2H4z"/></svg></button>
        <button aria-label="最大化" disabled><svg viewBox="0 0 18 16"><path fill="none" stroke="#fff" d="M4.500 4.500h10v9h-10z"/><path fill="none" stroke="#808080" d="M3.500 3.500h10v9h-10zM3 4.500h10"/></svg></button>
        <button class="close" aria-label="关闭"><svg viewBox="0 0 18 16"><path stroke="#000" stroke-width="2" d="M5 4l8 8M13 4l-8 8"/></svg></button>
      </div>
    </header>

    <div class="params">
      <div class="params-label">参数<br>模板</div>
      <output class="path">E:\tools\CADtt\batch-replace-blocktext-mtext-text-useEXCEL-20200328\<span class="zh">批量替换模板</span>.xlsx</output>
      <button class="btn pick">选文件</button>
      <span class="combo combo-version"><select aria-label="CAD 版本"><option>2007-R17</option></select><i></i></span>
    </div>

    <label class="rows" for="files"><span class="zh">行数：</span>1</label>
    <select id="files" class="files" size="2">
      <option>E:\tools\CADtt\batch-replace-blocktext-mtext-text-useEXCEL-20200328\t1.dwg</option>
    </select>
    <div class="actions">
      <button class="btn">添加</button>
      <button class="btn">删除</button>
      <button class="btn">清空</button>
    </div>
    <textarea class="log" aria-label="处理记录" readonly></textarea>
    <footer class="dialog-foot">
      <button class="btn wide">软件注册</button>
      <button class="btn wide">开始处理</button>
    </footer>
  </section>
</body>
</html>
```

FILE: styles.css
```css
:root {
  --face: #d4d0c8;
  --shadow: #808080;
  --dark: #404040;
  --mono: "Liberation Mono", "Noto Sans CJK SC", monospace;
  --cjk: "Noto Sans CJK SC", sans-serif;
}
* {
  box-sizing: border-box;
}
body {
  margin: 0;
  height: 100vh;
  display: flex;
  flex-direction: column;
  position: relative;
  overflow: hidden;
  background: var(--face);
  color: #000;
  font: 13px/16px var(--mono);
}
button, input, select, textarea {
  margin: 0;
  padding: 0;
  font: inherit;
  color: inherit;
  border: 0;
  border-radius: 0;
  outline: none;
}
button {
  background: var(--face);
}
svg {
  display: block;
  flex: none;
}
.zh {
  font-family: var(--cjk);
  font-size: 15px;
}

/* menu */
.menubar {
  flex: none;
  height: 9px;
  padding-bottom: 5px;
  display: flex;
  align-items: flex-end;
  gap: 21px;
  overflow: hidden;
  color: #777;
  white-space: pre;
}
.menubar .first {
  margin-left: -17px;
}
.app-controls {
  display: flex;
  margin: 0 -6px -1px auto;
}
.app-controls button {
  width: 21px;
  height: 18px;
  color: #000;
  border: 1px solid #fff;
  border-color: #fff var(--dark) var(--dark) #fff;
}
.app-controls button:last-child {
  margin-left: 2px;
}

/* toolbars */
.dock {
  flex: none;
  display: flex;
  flex-direction: column;
  gap: 1px;
}
.dock-row {
  display: flex;
  gap: 2px;
}
.bar {
  height: 27px;
  display: flex;
  align-items: center;
  padding: 0 4px 0 2px;
  border: 1px solid #fff;
  border-color: #fff var(--shadow) var(--shadow) #fff;
}
.bar-cut {
  width: 13px;
  padding: 0;
  border-left: 0;
}
.bar-standard {
  width: 653px;
  margin-left: -1px;
}
.grip {
  flex: none;
  width: 7px;
  height: 24px;
  margin-right: 2px;
  background: linear-gradient(90deg, #fff 2px, var(--shadow) 2px 3px, var(--face) 3px 4px, #fff 4px 6px, var(--shadow) 6px);
}
.sep {
  flex: none;
  width: 2px;
  height: 18px;
  margin: 0 2px;
  background: linear-gradient(90deg, var(--shadow) 1px, #fff 1px);
}
.sep.thick {
  margin: 0 3px;
}
.tool {
  flex: none;
  width: 23px;
  height: 22px;
  display: flex;
  align-items: center;
  justify-content: center;
}
.tool svg {
  width: 16px;
  height: 16px;
}
.drop {
  flex: none;
  width: 12px;
  height: 16px;
  display: flex;
  align-items: center;
  justify-content: center;
}
.drop::before {
  content: "";
  border: solid transparent;
  border-width: 4px 3px 0;
  border-top-color: #00006b;
}
.drop.off::before {
  border-top-color: #b5b5b5;
}
.drop.black::before {
  border-width: 4px 4px 0;
  border-top-color: #000;
}
.combo {
  flex: none;
  height: 20px;
  display: flex;
  align-items: center;
  padding: 1px;
  background: #fff;
  border: 1px solid #fff;
  border-color: var(--shadow) #fff #fff var(--shadow);
  box-shadow: inset 1px 1px var(--dark);
}
.combo select {
  flex: 1;
  min-width: 0;
  height: 16px;
  padding-left: 4px;
  appearance: none;
  background: transparent;
}
.combo > i {
  flex: none;
  align-self: stretch;
  width: 18px;
  display: flex;
  align-items: center;
  justify-content: center;
  background: var(--face);
  border: 1px solid #fff;
  border-color: #fff var(--dark) var(--dark) #fff;
  box-shadow: inset -1px -1px var(--shadow);
}
.combo > i::before {
  content: "";
  border: solid transparent;
  border-width: 4px 4px 0;
  border-top-color: #000;
}
.combo.off {
  color: var(--shadow);
  background: var(--face);
}
.combo.off select {
  padding-left: 8px;
  font: 15px/16px var(--cjk);
  opacity: 1;
  color: var(--shadow);
}
.combo.off > i::before {
  border-top-color: var(--shadow);
}
.combo-style {
  width: 99px;
}
.bar-workspace {
  width: 188px;
  padding-left: 0;
  border-left: 0;
}
.combo-workspace {
  width: 170px;
  margin: 0 1px 0 -34px;
}
.combo-workspace select {
  font-size: 14px;
}
.combo-layer {
  width: 299px;
  margin: 0 1px;
}
.layer-state {
  margin-left: 4px;
}
.bar-props {
  padding-right: 3px;
}
.combo-color {
  width: 147px;
}
.swatch {
  width: 11px;
  height: 11px;
  margin-left: 3px;
  border: 1px solid #000;
}
.swatch + select {
  padding-left: 3px;
}
.combo-line {
  width: 158px;
}
.combo-weight {
  width: 122px;
}
.combo-plot {
  width: 119px;
}
.line {
  width: 35px;
  height: 1px;
  margin-left: 3px;
  background: #000;
}
.line-long {
  width: 60px;
}

/* drawing area */
.workspace {
  flex: 1;
  min-height: 0;
  display: flex;
}
.drawing {
  flex: 1;
  min-width: 0;
  display: flex;
  flex-direction: column;
  border-right: 1px solid #fff;
}
.canvas {
  flex: 1;
  display: flex;
  align-items: flex-end;
  background: #000;
  border-top: 2px solid var(--dark);
}
.tabs {
  flex: none;
  height: 22px;
  display: flex;
  align-items: flex-start;
  border-bottom: 3px solid #fff;
}
.tab-nav {
  width: 18px;
  height: 18px;
  display: flex;
  align-items: center;
  justify-content: center;
  border: 1px solid #fff;
  border-color: #fff var(--shadow) var(--shadow) #fff;
}
.tab-nav:first-child {
  margin-left: -4px;
}
.tab {
  height: 18px;
  padding: 0 3px 2px;
  font: 15px/15px var(--cjk);
  border-bottom: 1px solid #000;
}
.tab.active {
  padding: 0 2px 2px;
  background: #000;
  color: #fff;
}
.edge {
  width: 8px;
  height: 18px;
}
.edge-first {
  margin-left: 3px;
}
.modify {
  flex: none;
  width: 19px;
  padding-left: 2px;
  overflow: hidden;
}
.vbar {
  display: flex;
  flex-direction: column;
  gap: 4px;
  height: 391px;
  padding: 2px 0 0 3px;
  border: 1px solid #fff;
  border-right: 0;
  border-bottom-color: var(--shadow);
}
.vbar.order {
  height: 106px;
  margin-top: 2px;
}
.vbar svg {
  width: 18px;
  height: 18px;
}
.vgrip {
  flex: none;
  height: 7px;
  background: linear-gradient(#fff 2px, var(--shadow) 2px 3px, var(--face) 3px 4px, #fff 4px 6px, var(--shadow) 6px);
}

/* command line */
.command {
  flex: none;
  height: 60px;
  margin-right: 20px;
  padding-top: 30px;
  display: flex;
  align-items: center;
  background: linear-gradient(var(--face) 2px, var(--shadow) 2px 3px, #000 3px 4px, var(--face) 4px 13px, #000 13px 15px, #fff 15px 56px, var(--face) 56px 58px, var(--shadow) 58px 59px, #fff 59px);
}
.command label {
  margin-left: -23px;
  font: 15px/18px var(--cjk);
}
.command input {
  flex: 1;
  height: 18px;
  padding-left: 4px;
  background: transparent;
}

/* status bar */
.status {
  flex: none;
  height: 23px;
  display: flex;
  align-items: center;
  gap: 4px;
}
.coords {
  width: 187px;
  height: 18px;
  text-indent: -1px;
  line-height: 21px;
  border: 1px solid var(--shadow);
  border-left: 0;
}
.status button:not(.drop) {
  height: 18px;
  padding: 0 1px;
  font: 15px/16px var(--cjk);
  border: 1px solid #fff;
  border-color: #fff var(--shadow) var(--shadow) #fff;
}
.status button.on:not(.drop) {
  border-color: #000 #fff #fff #000;
}
.status button.latin:not(.drop) {
  padding-top: 2px;
  font: 13px/14px var(--mono);
}
.status-tray {
  display: flex;
  gap: 4px;
  width: 44px;
  height: 18px;
  margin: 0 2px 0 auto;
  padding: 0 4px;
  border: 1px solid #fff;
  border-color: var(--shadow) #fff #fff var(--shadow);
}
.clean {
  margin-left: 2px;
}

/* taskbar */
.taskbar {
  flex: none;
  height: 19px;
  display: flex;
  align-items: flex-start;
  padding-top: 2px;
  overflow: hidden;
  border-top: 1px solid #fff;
}
.task {
  flex: none;
  width: 146px;
  height: 28px;
  margin-right: 2px;
  padding: 0 4px;
  display: flex;
  align-items: center;
  white-space: pre;
  border: 1px solid #fff;
  border-color: #fff var(--dark) var(--dark) #fff;
  box-shadow: inset -1px -1px var(--shadow);
}
.task svg {
  width: 20px;
  height: 20px;
  margin-right: 3px;
}
.task-cut {
  width: 9px;
  margin-right: 8px;
  padding: 0;
  justify-content: flex-end;
  font: 15px/16px var(--cjk);
}
.quick {
  flex: 1;
  display: flex;
  justify-content: space-between;
  padding: 3px 10px 0 8px;
}
.quick svg, .tray svg {
  width: 20px;
  height: 20px;
}
.quick.single {
  flex: none;
  padding: 3px 10px 0 8px;
}
.tray {
  flex: none;
  width: 267px;
  height: 28px;
  margin-left: 2px;
  padding: 2px 0 0 8px;
  display: flex;
  gap: 10px;
  border: solid var(--shadow);
  border-width: 1px 0 0 1px;
}
.tray time {
  margin-left: 9px;
  line-height: 24px;
}

/* dialog */
.dialog {
  position: absolute;
  top: 93px;
  right: 318px;
  bottom: 94px;
  left: 275px;
  display: flex;
  flex-direction: column;
  padding: 2px;
  background: var(--face);
  border: 1px solid var(--face);
  border-right-color: var(--dark);
  border-bottom-color: var(--dark);
  box-shadow: inset 1px 1px #fff, inset -1px -1px var(--shadow);
}
.titlebar {
  flex: none;
  height: 23px;
  margin: 1px;
  padding: 0 2px;
  display: flex;
  align-items: center;
  color: var(--face);
  background: linear-gradient(90deg, #808080, #c0c0c0);
}
.titlebar h1 {
  flex: 1;
  margin: 0 0 0 3px;
  font: bold 14px/20px var(--mono);
  white-space: pre;
}
.titlebar .zh {
  font-size: 16px;
  font-weight: normal;
}
.controls {
  display: flex;
}
.controls button {
  width: 21px;
  height: 19px;
  border: 1px solid #fff;
  border-color: #fff var(--dark) var(--dark) #fff;
  box-shadow: inset -1px -1px var(--shadow);
}
.controls svg {
  width: 18px;
  height: 16px;
}
.controls .close {
  margin-left: 2px;
}
.params {
  flex: none;
  height: 33px;
  margin: 10px 1px 0;
  display: flex;
}
.params-label {
  width: 40px;
  padding: 1px 0 0;
  font: 15px/16px var(--cjk);
}
.path {
  flex: 1;
  padding: 0 7px;
  line-height: 26px;
  color: #00f;
  border: 1px solid #fff;
  border-color: var(--shadow) #fff #fff var(--shadow);
  box-shadow: inset 1px 1px var(--dark);
}
.btn {
  flex: none;
  width: 71px;
  height: 31px;
  padding-bottom: 3px;
  font: 15px/18px var(--cjk);
  border: 1px solid #fff;
  border-color: #fff var(--dark) var(--dark) #fff;
  box-shadow: inset -1px -1px var(--shadow);
}
.btn.pick {
  width: 61px;
  height: 33px;
  margin: 0 9px;
}
.btn.wide {
  width: 121px;
}
.combo-version {
  width: 201px;
  height: 33px;
}
.combo-version select {
  height: 29px;
  padding-left: 2px;
  font: 26px/28px "Liberation Serif", serif;
}
.rows {
  flex: none;
  height: 18px;
  margin: 14px 1px 5px;
  line-height: 18px;
}
.files, .log {
  margin: 0 1px;
  background: #fff;
  border: 1px solid #fff;
  border-color: var(--shadow) #fff #fff var(--shadow);
  box-shadow: inset 1px 1px var(--dark), inset -1px -1px var(--face);
}
.files {
  flex: 289 1 0;
  overflow: hidden;
}
.files option {
  padding: 2px 2px;
  min-height: 16px;
}
.actions {
  flex: none;
  display: flex;
  justify-content: center;
  gap: 49px;
  padding: 5px 70px 5px 0;
}
.log {
  flex: 282 1 0;
  resize: none;
}
.dialog-foot {
  flex: none;
  display: flex;
  justify-content: space-between;
  padding: 48px 21px 10px;
}
```
